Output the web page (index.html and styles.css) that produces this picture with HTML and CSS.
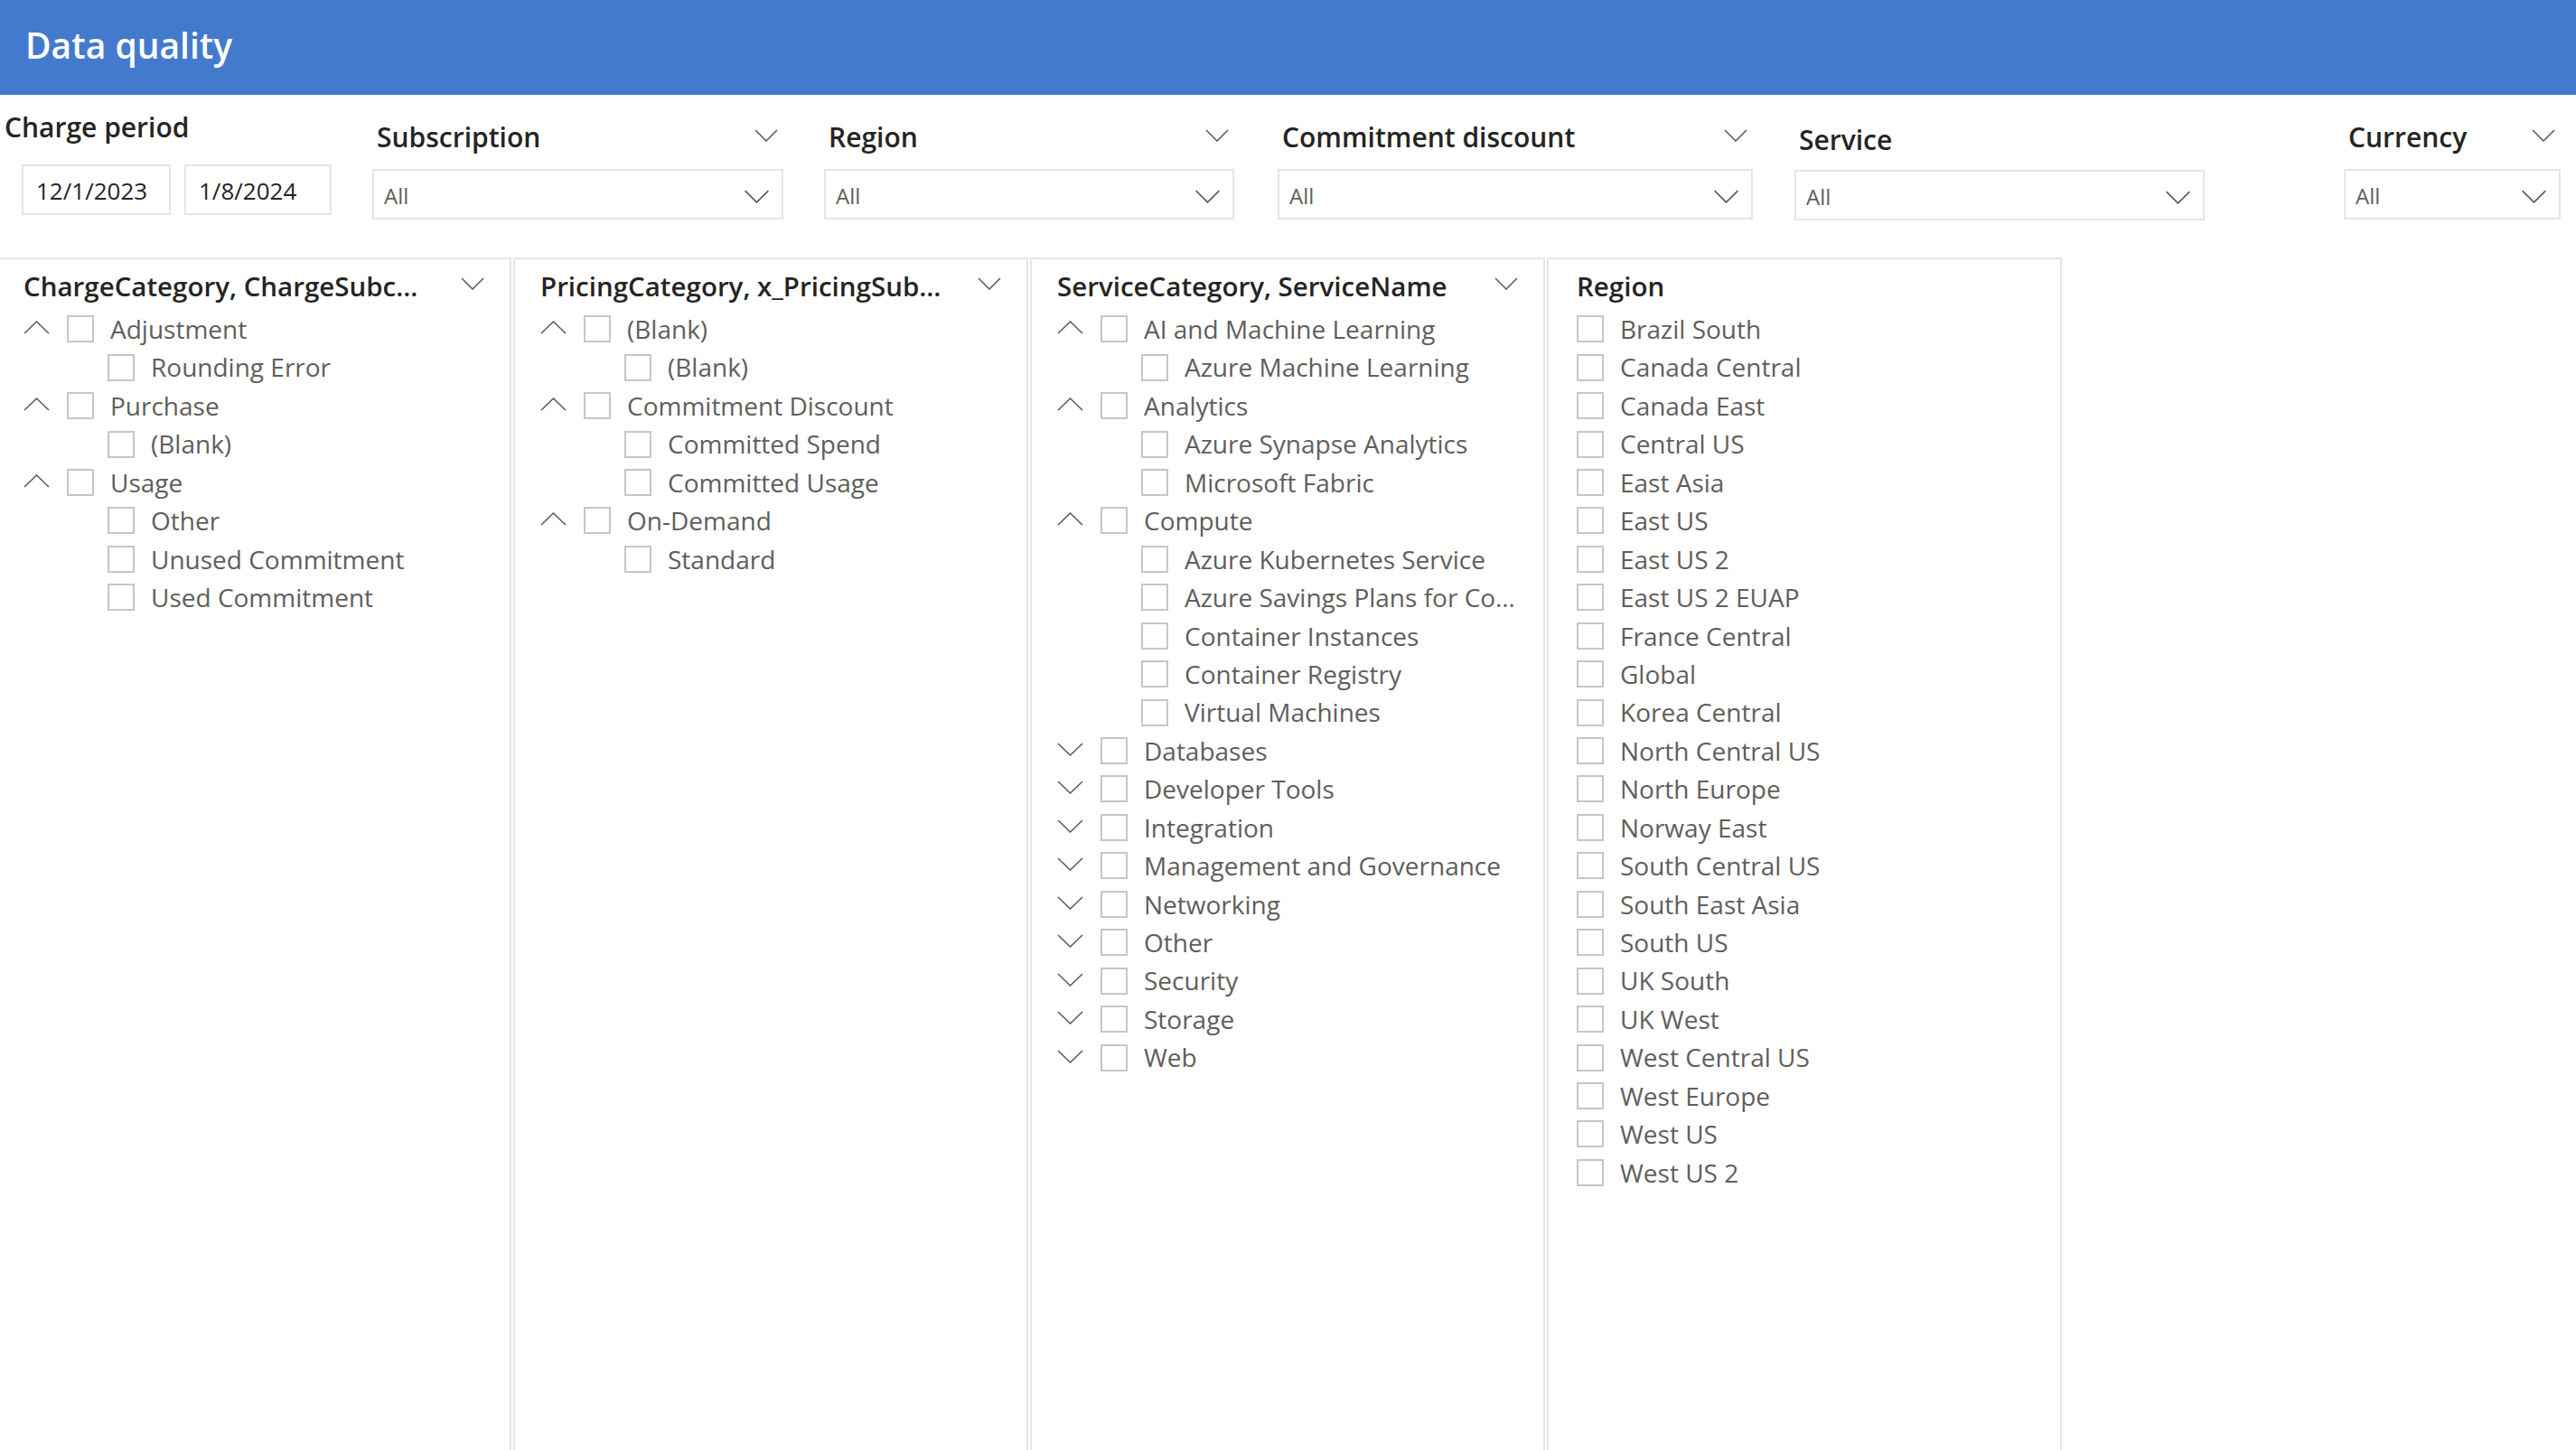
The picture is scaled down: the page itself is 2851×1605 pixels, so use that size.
FILE: index.html
```html
<!DOCTYPE html>
<html lang="en">
<head>
<meta charset="utf-8">
<title>Data quality</title>
<link rel="stylesheet" href="styles.css">
</head>
<body>
<svg class="defs" aria-hidden="true">
  <symbol id="up" viewBox="0 0 29 15"><polyline points="1,14 14.5,1 28,14" fill="none" stroke="#605e5c" stroke-width="1.6"/></symbol>
  <symbol id="down" viewBox="0 0 29 15"><polyline points="1,1 14.5,14 28,1" fill="none" stroke="#605e5c" stroke-width="1.6"/></symbol>
  <symbol id="dd" viewBox="0 0 26 14"><polyline points="1,1 13,13 25,1" fill="none" stroke="#605e5c" stroke-width="1.6"/></symbol>
</svg>

<header class="topbar"><h1 class="title">Data quality</h1></header>

<section class="filters">
  <div class="period">
    <div class="period-label">Charge period</div>
    <div class="dates">
      <div class="date d1">12/1/2023</div>
      <div class="date d2">1/8/2024</div>
    </div>
  </div>
  <div class="slicer sub">
    <div class="sl-head"><span>Subscription</span><svg class="hchev"><use href="#dd"/></svg></div>
    <div class="dd"><span>All</span><svg class="ddchev"><use href="#dd"/></svg></div>
  </div>
  <div class="slicer reg">
    <div class="sl-head"><span>Region</span><svg class="hchev"><use href="#dd"/></svg></div>
    <div class="dd"><span>All</span><svg class="ddchev"><use href="#dd"/></svg></div>
  </div>
  <div class="slicer cd">
    <div class="sl-head"><span>Commitment discount</span><svg class="hchev"><use href="#dd"/></svg></div>
    <div class="dd"><span>All</span><svg class="ddchev"><use href="#dd"/></svg></div>
  </div>
  <div class="slicer svc">
    <div class="sl-head"><span>Service</span></div>
    <div class="dd"><span>All</span><svg class="ddchev"><use href="#dd"/></svg></div>
  </div>
  <div class="slicer cur">
    <div class="sl-head"><span>Currency</span><svg class="hchev"><use href="#dd"/></svg></div>
    <div class="dd"><span>All</span><svg class="ddchev"><use href="#dd"/></svg></div>
  </div>
</section>

<section class="panels">
  <div class="panel">
    <div class="ph"><span>ChargeCategory, ChargeSubc…</span><svg class="hchev"><use href="#dd"/></svg></div>
    <div class="row"><svg class="tog"><use href="#up"/></svg><span class="cb"></span>Adjustment</div>
    <div class="row child"><span class="cb"></span>Rounding Error</div>
    <div class="row"><svg class="tog"><use href="#up"/></svg><span class="cb"></span>Purchase</div>
    <div class="row child"><span class="cb"></span>(Blank)</div>
    <div class="row"><svg class="tog"><use href="#up"/></svg><span class="cb"></span>Usage</div>
    <div class="row child"><span class="cb"></span>Other</div>
    <div class="row child"><span class="cb"></span>Unused Commitment</div>
    <div class="row child"><span class="cb"></span>Used Commitment</div>
  </div>

  <div class="panel">
    <div class="ph"><span>PricingCategory, x_PricingSub…</span><svg class="hchev"><use href="#dd"/></svg></div>
    <div class="row"><svg class="tog"><use href="#up"/></svg><span class="cb"></span>(Blank)</div>
    <div class="row child"><span class="cb"></span>(Blank)</div>
    <div class="row"><svg class="tog"><use href="#up"/></svg><span class="cb"></span>Commitment Discount</div>
    <div class="row child"><span class="cb"></span>Committed Spend</div>
    <div class="row child"><span class="cb"></span>Committed Usage</div>
    <div class="row"><svg class="tog"><use href="#up"/></svg><span class="cb"></span>On-Demand</div>
    <div class="row child"><span class="cb"></span>Standard</div>
  </div>

  <div class="panel">
    <div class="ph"><span>ServiceCategory, ServiceName</span><svg class="hchev"><use href="#dd"/></svg></div>
    <div class="row"><svg class="tog"><use href="#up"/></svg><span class="cb"></span>AI and Machine Learning</div>
    <div class="row child"><span class="cb"></span>Azure Machine Learning</div>
    <div class="row"><svg class="tog"><use href="#up"/></svg><span class="cb"></span>Analytics</div>
    <div class="row child"><span class="cb"></span>Azure Synapse Analytics</div>
    <div class="row child"><span class="cb"></span>Microsoft Fabric</div>
    <div class="row"><svg class="tog"><use href="#up"/></svg><span class="cb"></span>Compute</div>
    <div class="row child"><span class="cb"></span>Azure Kubernetes Service</div>
    <div class="row child"><span class="cb"></span>Azure Savings Plans for Co…</div>
    <div class="row child"><span class="cb"></span>Container Instances</div>
    <div class="row child"><span class="cb"></span>Container Registry</div>
    <div class="row child"><span class="cb"></span>Virtual Machines</div>
    <div class="row"><svg class="tog"><use href="#down"/></svg><span class="cb"></span>Databases</div>
    <div class="row"><svg class="tog"><use href="#down"/></svg><span class="cb"></span>Developer Tools</div>
    <div class="row"><svg class="tog"><use href="#down"/></svg><span class="cb"></span>Integration</div>
    <div class="row"><svg class="tog"><use href="#down"/></svg><span class="cb"></span>Management and Governance</div>
    <div class="row"><svg class="tog"><use href="#down"/></svg><span class="cb"></span>Networking</div>
    <div class="row"><svg class="tog"><use href="#down"/></svg><span class="cb"></span>Other</div>
    <div class="row"><svg class="tog"><use href="#down"/></svg><span class="cb"></span>Security</div>
    <div class="row"><svg class="tog"><use href="#down"/></svg><span class="cb"></span>Storage</div>
    <div class="row"><svg class="tog"><use href="#down"/></svg><span class="cb"></span>Web</div>
  </div>

  <div class="panel flat">
    <div class="ph"><span>Region</span></div>
    <div class="row"><span class="cb"></span>Brazil South</div>
    <div class="row"><span class="cb"></span>Canada Central</div>
    <div class="row"><span class="cb"></span>Canada East</div>
    <div class="row"><span class="cb"></span>Central US</div>
    <div class="row"><span class="cb"></span>East Asia</div>
    <div class="row"><span class="cb"></span>East US</div>
    <div class="row"><span class="cb"></span>East US 2</div>
    <div class="row"><span class="cb"></span>East US 2 EUAP</div>
    <div class="row"><span class="cb"></span>France Central</div>
    <div class="row"><span class="cb"></span>Global</div>
    <div class="row"><span class="cb"></span>Korea Central</div>
    <div class="row"><span class="cb"></span>North Central US</div>
    <div class="row"><span class="cb"></span>North Europe</div>
    <div class="row"><span class="cb"></span>Norway East</div>
    <div class="row"><span class="cb"></span>South Central US</div>
    <div class="row"><span class="cb"></span>South East Asia</div>
    <div class="row"><span class="cb"></span>South US</div>
    <div class="row"><span class="cb"></span>UK South</div>
    <div class="row"><span class="cb"></span>UK West</div>
    <div class="row"><span class="cb"></span>West Central US</div>
    <div class="row"><span class="cb"></span>West Europe</div>
    <div class="row"><span class="cb"></span>West US</div>
    <div class="row"><span class="cb"></span>West US 2</div>
  </div>
</section>
</body>
</html>
```

FILE: styles.css
```css
* { box-sizing: border-box; }

html, body {
  margin: 0;
  padding: 0;
}

body {
  width: 2851px;
  height: 1605px;
  overflow: hidden;
  background: #ffffff;
  font-family: "Open Sans", "Noto Sans", "Liberation Sans", sans-serif;
  color: #252423;
}

.defs {
  position: absolute;
  width: 0;
  height: 0;
  overflow: hidden;
}

/* ---------- top bar ---------- */
.topbar {
  height: 105px;
  background: #447acd;
  color: #ffffff;
}

.title {
  margin: 0;
  padding-left: 28px;
  font-size: 39px;
  font-weight: 600;
  line-height: 99px;
}

/* ---------- filter row ---------- */
.filters {
  display: flex;
  align-items: flex-start;
  height: 180px;
}

.period {
  width: 412px;
  flex: none;
  padding-top: 16px;
}

.period-label {
  height: 40px;
  line-height: 40px;
  padding-left: 5px;
  font-size: 30px;
  font-weight: 600;
  color: #252423;
}

.dates {
  display: flex;
  gap: 15px;
  margin-top: 21px;
  padding-left: 24px;
}

.date {
  height: 56px;
  border: 2px solid #e6e6e6;
  padding-left: 14px;
  font-size: 26px;
  line-height: 54px;
  color: #252423;
}

.d1 { width: 165px; }
.d2 { width: 163px; }

.slicer {
  flex: none;
  padding-top: 27px;
}

.sl-head {
  display: flex;
  justify-content: space-between;
  align-items: center;
  height: 40px;
  padding: 0 6px 0 5px;
  font-size: 30px;
  font-weight: 600;
  line-height: 40px;
  color: #252423;
  white-space: nowrap;
}

.hchev {
  width: 26px;
  height: 14px;
  flex: none;
  margin-top: -4px;
}

.dd {
  display: flex;
  align-items: center;
  justify-content: space-between;
  height: 56px;
  margin-top: 15px;
  border: 2px solid #e6e6e6;
  padding: 4px 13px 0 11px;
  font-size: 24px;
  line-height: 48px;
  color: #605e5c;
}

.ddchev {
  width: 29px;
  height: 15px;
  flex: none;
}

.sub { width: 455px; }
.reg { width: 454px; margin-left: 45px; }
.cd  { width: 526px; margin-left: 48px; }
.svc { width: 454px; margin-left: 46px; }
.svc .sl-head { margin-top: 3px; }
.svc .dd { margin-top: 13px; }
.cur { width: 240px; margin-left: 154px; }

/* ---------- slicer panels ---------- */
.panels {
  display: flex;
  gap: 2px;
  margin-left: -4px;
}

.panel {
  width: 570px;
  height: 1340px;
  flex: none;
  border: 2px solid #e6e6e6;
  padding: 9px 28px 0 28px;
}

.panel.flat {
  padding-left: 31px;
}

.ph {
  display: flex;
  justify-content: space-between;
  align-items: center;
  height: 42px;
  margin-bottom: 5px;
  font-size: 29.5px;
  font-weight: 600;
  line-height: 42px;
  color: #252423;
  white-space: nowrap;
}

.ph .hchev {
  margin-top: -6px;
}

.row {
  display: flex;
  align-items: center;
  height: 42.45px;
  font-size: 28px;
  line-height: 42.45px;
  color: #605e5c;
  white-space: nowrap;
}

.row.child {
  padding-left: 93px;
}

.tog {
  width: 29px;
  height: 15px;
  margin-right: 19px;
  margin-top: -3px;
  flex: none;
}

.cb {
  width: 30px;
  height: 30px;
  margin-right: 18px;
  flex: none;
  border: 2px solid #c8c6c4;
  background: #ffffff;
}
```
